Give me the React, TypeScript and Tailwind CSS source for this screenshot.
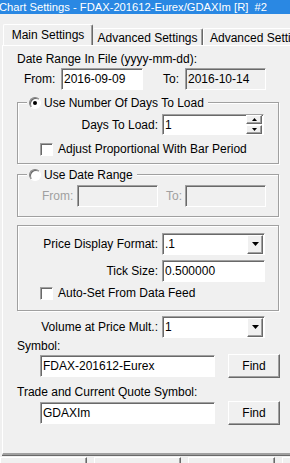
import type { ReactNode } from "react";

/* classic Win32 bevels */
const sunken =
  "border border-t-[#a0a0a0] border-l-[#a0a0a0] border-r-white border-b-white shadow-[inset_1px_1px_0_#696969]";
const raised =
  "border border-t-white border-l-white border-r-[#696969] border-b-[#696969] shadow-[inset_-1px_-1px_0_#a0a0a0]";
const etched = "border border-[#a0a0a0] shadow-[inset_1px_1px_0_#fff,1px_1px_0_#fff]";

function Field({ value, w, h = "h-[22px]", bg = "bg-white", children }: { value?: string; w: string; h?: string; bg?: string; children?: ReactNode }) {
  return (
    <div className={`${w} ${h} ${bg} ${sunken} flex items-center pl-[2px] text-black`}>
      <span className="flex-1 whitespace-nowrap">{value}</span>
      {children}
    </div>
  );
}

function Combo({ value, w }: { value: string; w: string }) {
  return (
    <Field value={value} w={w}>
      <div className={`mr-[1px] flex h-[19px] w-[16px] items-center justify-center bg-[#f0f0f0] ${raised}`}>
        <svg width="7" height="4" viewBox="0 0 7 4">
          <path d="M0 0h7L3.5 4z" fill="#000" />
        </svg>
      </div>
    </Field>
  );
}

function Spin() {
  return (
    <div className="mr-[1px] flex flex-col gap-[1px]">
      {["M2.5 0L5 3H0z", "M0 0h5L2.5 3z"].map((d) => (
        <div key={d} className={`flex h-[9px] w-[16px] items-center justify-center bg-[#f0f0f0] ${raised}`}>
          <svg width="5" height="3" viewBox="0 0 5 3">
            <path d={d} fill="#000" />
          </svg>
        </div>
      ))}
    </div>
  );
}

function Check({ label }: { label: string }) {
  return (
    <div className="ml-[22px] flex items-center">
      <div className={`h-[13px] w-[13px] bg-white ${sunken}`} />
      <span className="ml-[5px]">{label}</span>
    </div>
  );
}

function Radio({ on, label }: { on?: boolean; label: string }) {
  return (
    <div className="relative z-10 -mt-[7px] ml-[9px] flex w-fit items-center bg-[#f0f0f0] px-[2px]">
      <div className="flex h-[12px] w-[12px] items-center justify-center rounded-full border border-t-[#808080] border-l-[#808080] border-r-white border-b-white bg-white shadow-[inset_1px_1px_0_#696969]">
        {on && <div className="h-[4px] w-[4px] rounded-full bg-black" />}
      </div>
      <span className="ml-[3px] pr-[2px]">{label}</span>
    </div>
  );
}

export default function App() {
  return (
    <div className="h-[463px] w-[290px] overflow-hidden bg-[#f0f0f0] font-['Liberation_Sans',Arial,sans-serif] text-[12px] leading-[14px] text-black">
      <div className="h-[14px] overflow-hidden whitespace-nowrap bg-[#2a88e3] pl-0 text-[11.2px] leading-[14px] text-white">
        <span className="-ml-[1px]">Chart Settings - FDAX-201612-Eurex/GDAXIm [R]&nbsp;&nbsp;#2</span>
      </div>

      {/* tabs */}
      <div className="mt-[10px] flex h-[21px] items-end overflow-hidden whitespace-nowrap pl-[3px]">
        <div className="relative z-10 -mb-[1px] h-[22px] w-[90px] shrink-0 rounded-t-[2px] border-l border-t border-r border-l-white border-t-white border-r-[#696969] bg-[#f0f0f0] pt-[3px] text-center shadow-[inset_-1px_0_0_#a0a0a0]">
          Main Settings
        </div>
        <div className="h-[17px] w-[110px] shrink-0 rounded-t-[2px] border-t border-r border-t-white border-r-[#696969] pt-[2px] text-center shadow-[inset_-1px_0_0_#a0a0a0]">
          Advanced Settings
        </div>
        <div className="h-[17px] w-[120px] shrink-0 rounded-t-[2px] border-l border-t border-l-white border-t-white pl-[6px] pt-[2px]">
          Advanced Settings 2
        </div>
      </div>

      {/* page */}
      <div className="ml-[2px] flex h-[410px] w-[300px] flex-col border-l border-t border-b-2 border-l-white border-t-white border-b-[#a0a0a0] shadow-[0_1px_0_#696969]">
        <div className="ml-[14px] mt-[6px]">Date Range In File (yyyy-mm-dd):</div>
        <div className="mt-[2px] flex items-center">
          <span className="ml-[21px] w-[37px]">From:</span>
          <Field value="2016-09-09" w="w-[82px]" />
          <span className="ml-[20px] w-[22px]">To:</span>
          <Field value="2016-10-14" w="w-[81px]" bg="bg-[#f0f0f0]" />
        </div>

        <div className={`ml-[14px] mt-[12px] w-[262px] pb-[7px] ${etched}`}>
          <Radio on label="Use Number Of Days To Load" />
          <div className="mt-[4px] flex items-center">
            <span className="w-[140px] text-right">Days To Load:</span>
            <Field value="1" w="ml-[4px] w-[102px]" h="h-[21px]">
              <Spin />
            </Field>
          </div>
          <div className="mt-[7px]">
            <Check label="Adjust Proportional With Bar Period" />
          </div>
        </div>

        <div className={`ml-[14px] mt-[10px] w-[262px] pb-[9px] ${etched}`}>
          <Radio label="Use Date Range" />
          <div className="mt-[3px] flex items-center text-[#a0a0a0]">
            <span className="ml-[24px] w-[35px]">From:</span>
            <Field w="w-[81px]" bg="bg-[#f0f0f0]" />
            <span className="ml-[8px] w-[19px]">To:</span>
            <Field w="w-[81px]" bg="bg-[#f0f0f0]" />
          </div>
        </div>

        <div className={`ml-[14px] mt-[8px] w-[262px] pb-[10px] pt-[7px] ${etched}`}>
          <div className="flex items-center">
            <span className="w-[140px] text-right">Price Display Format:</span>
            <Combo value=".1" w="ml-[4px] w-[103px]" />
          </div>
          <div className="mt-[5px] flex items-center">
            <span className="w-[140px] text-right">Tick Size:</span>
            <Field value="0.500000" w="ml-[4px] w-[103px]" />
          </div>
          <div className="mt-[4px]">
            <Check label="Auto-Set From Data Feed" />
          </div>
        </div>

        <div className="mt-[5px] flex items-center">
          <span className="w-[155px] text-right">Volume at Price Mult.:</span>
          <Combo value="1" w="ml-[4px] w-[103px]" />
        </div>
        <div className="ml-[14px] mt-[1px]">Symbol:</div>
        <div className="mt-[1px] flex h-[24px] items-center">
          <Field value="FDAX-201612-Eurex" w="ml-[37px] w-[175px]" />
          <button className={`ml-[13px] h-[24px] w-[52px] bg-[#f0f0f0] ${raised}`}>Find</button>
        </div>
        <div className="ml-[14px] mt-[7px]">Trade and Current Quote Symbol:</div>
        <div className="mt-[2px] flex h-[24px] items-center">
          <Field value="GDAXIm" w="ml-[37px] w-[175px]" />
          <button className={`ml-[13px] h-[24px] w-[52px] bg-[#f0f0f0] ${raised}`}>Find</button>
        </div>
      </div>

      {/* dialog buttons, cut off at the bottom */}
      <div className="mt-[2px] flex gap-[7px]">
        {[0, 1, 2, 3].map((i) => (
          <div key={i} className={`h-[20px] w-[87px] shrink-0 bg-[#f0f0f0] ${raised}`} />
        ))}
      </div>
    </div>
  );
}
